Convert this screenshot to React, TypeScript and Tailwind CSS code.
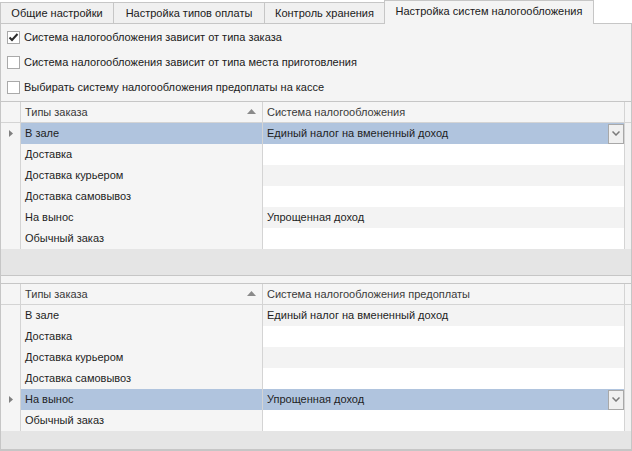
import React from "react";

const rows = ["В зале", "Доставка", "Доставка курьером", "Доставка самовывоз", "На вынос", "Обычный заказ"];

function Checkbox({ checked, label }: { checked?: boolean; label: string }) {
  return (
    <div className="h-[25px] flex items-center pl-[6px]">
      <div className="w-[13px] h-[13px] border border-[#a9a9a9] bg-white flex items-center justify-center">
        {checked && (
          <svg width="11" height="11" viewBox="0 0 11 11">
            <path d="M1.5 5.5 L4 8 L9.5 2" fill="none" stroke="#2b2b2b" strokeWidth="2" />
          </svg>
        )}
      </div>
      <span className="ml-[4px] text-[#202020]">{label}</span>
    </div>
  );
}

function Grid({ header2, values, selected, gray }: { header2: string; values: string[]; selected: number; gray: string }) {
  return (
    <div className="flex flex-col border-t border-b border-[#c6c6c6]">
      <div className="flex h-[21px] bg-[#f5f5f5]">
        <div className="w-[20px] border-r border-b border-[#d4d4d4]" />
        <div className="w-[242px] border-r border-b border-[#d4d4d4] flex items-center pl-[4px] pr-[6px] text-[#3a3a3a]">
          <span className="flex-1">Типы заказа</span>
          <svg width="9" height="5" viewBox="0 0 9 5" className="mb-px">
            <path d="M0 5 L4.5 0 L9 5 Z" fill="#8a8a8a" />
          </svg>
        </div>
        <div className="w-[362px] border-r border-b border-[#d4d4d4] flex items-center pl-[4px] text-[#3a3a3a]">{header2}</div>
        <div className="flex-1 border-b border-[#d4d4d4]" />
      </div>
      {rows.map((r, i) => {
        const sel = i === selected;
        const c2bg = sel ? "bg-[#b0c4de]" : i % 2 === 0 ? "bg-[#f3f3f3]" : "bg-white";
        return (
          <div key={r} className="flex h-[21px]">
            <div className="w-[20px] border-r border-[#d4d4d4] bg-[#f5f5f5] flex items-center justify-center">
              {sel && (
                <svg width="4" height="7" viewBox="0 0 4 7">
                  <path d="M0 0 L4 3.5 L0 7 Z" fill="#808080" />
                </svg>
              )}
            </div>
            <div className={`w-[242px] border-r border-[#d4d4d4] flex items-center pl-[4px] text-[#1e1e1e] ${sel ? "bg-[#b0c4de]" : "bg-[#f5f5f5]"}`}>
              {r}
            </div>
            <div className={`w-[362px] border-r border-[#d4d4d4] flex items-center pl-[4px] text-[#1e1e1e] ${c2bg}`}>
              <span className="flex-1">{values[i]}</span>
              {sel && (
                <div className="w-[16px] h-[20px] border border-[#a8a8a8] bg-[#f0f0f0] flex items-center justify-center">
                  <svg width="8" height="5" viewBox="0 0 8 5">
                    <path d="M0.5 0.5 L4 4 L7.5 0.5" fill="none" stroke="#7a7a7a" strokeWidth="1.5" />
                  </svg>
                </div>
              )}
            </div>
            <div className="flex-1 bg-[#f3f3f3]" />
          </div>
        );
      })}
      <div className={`${gray} bg-[#e5e5e5]`} />
    </div>
  );
}

export default function App() {
  const v1 = ["Единый налог на вмененный доход", "", "", "", "Упрощенная доход", ""];
  const v2 = ["Единый налог на вмененный доход", "", "", "", "Упрощенная доход", ""];
  return (
    <div
      className="w-[632px] h-[451px] bg-white overflow-hidden text-[11px] leading-none flex flex-col"
      style={{ fontFamily: '"Liberation Sans", Arial, sans-serif' }}
    >
      <div className="flex h-[24px] items-end">
        <div className="w-[114px] h-[22px] border border-[#c6c6c6] bg-[#f0f0f0] flex items-center justify-center text-[#202020]">Общие настройки</div>
        <div className="w-[152px] h-[22px] -ml-px border border-[#c6c6c6] bg-[#f0f0f0] flex items-center justify-center text-[#202020]">Настройка типов оплаты</div>
        <div className="w-[121px] h-[22px] -ml-px border border-[#c6c6c6] bg-[#f0f0f0] flex items-center justify-center text-[#202020]">Контроль хранения</div>
        <div className="w-[210px] h-[24px] -ml-px border border-b-0 border-[#c6c6c6] bg-[#f4f4f4] flex items-center justify-center text-[#202020] pb-[2px]">Настройка систем налогообложения</div>
        <div className="flex-1 h-[1px] bg-[#c6c6c6]" />
      </div>
      <div className="flex-1 flex flex-col bg-[#f4f4f4] border-l border-r border-b border-[#c6c6c6]">
        <div className="h-[77px] pt-px">
          <Checkbox checked label="Система налогообложения зависит от типа заказа" />
          <Checkbox label="Система налогообложения зависит от типа места приготовления" />
          <Checkbox label="Выбирать систему налогообложения предоплаты на кассе" />
        </div>
        <Grid header2="Система налогообложения" values={v1} selected={0} gray="h-[26px]" />
        <div className="h-[7px]" />
        <Grid header2="Система налогообложения предоплаты" values={v2} selected={4} gray="h-[18px]" />
      </div>
    </div>
  );
}
